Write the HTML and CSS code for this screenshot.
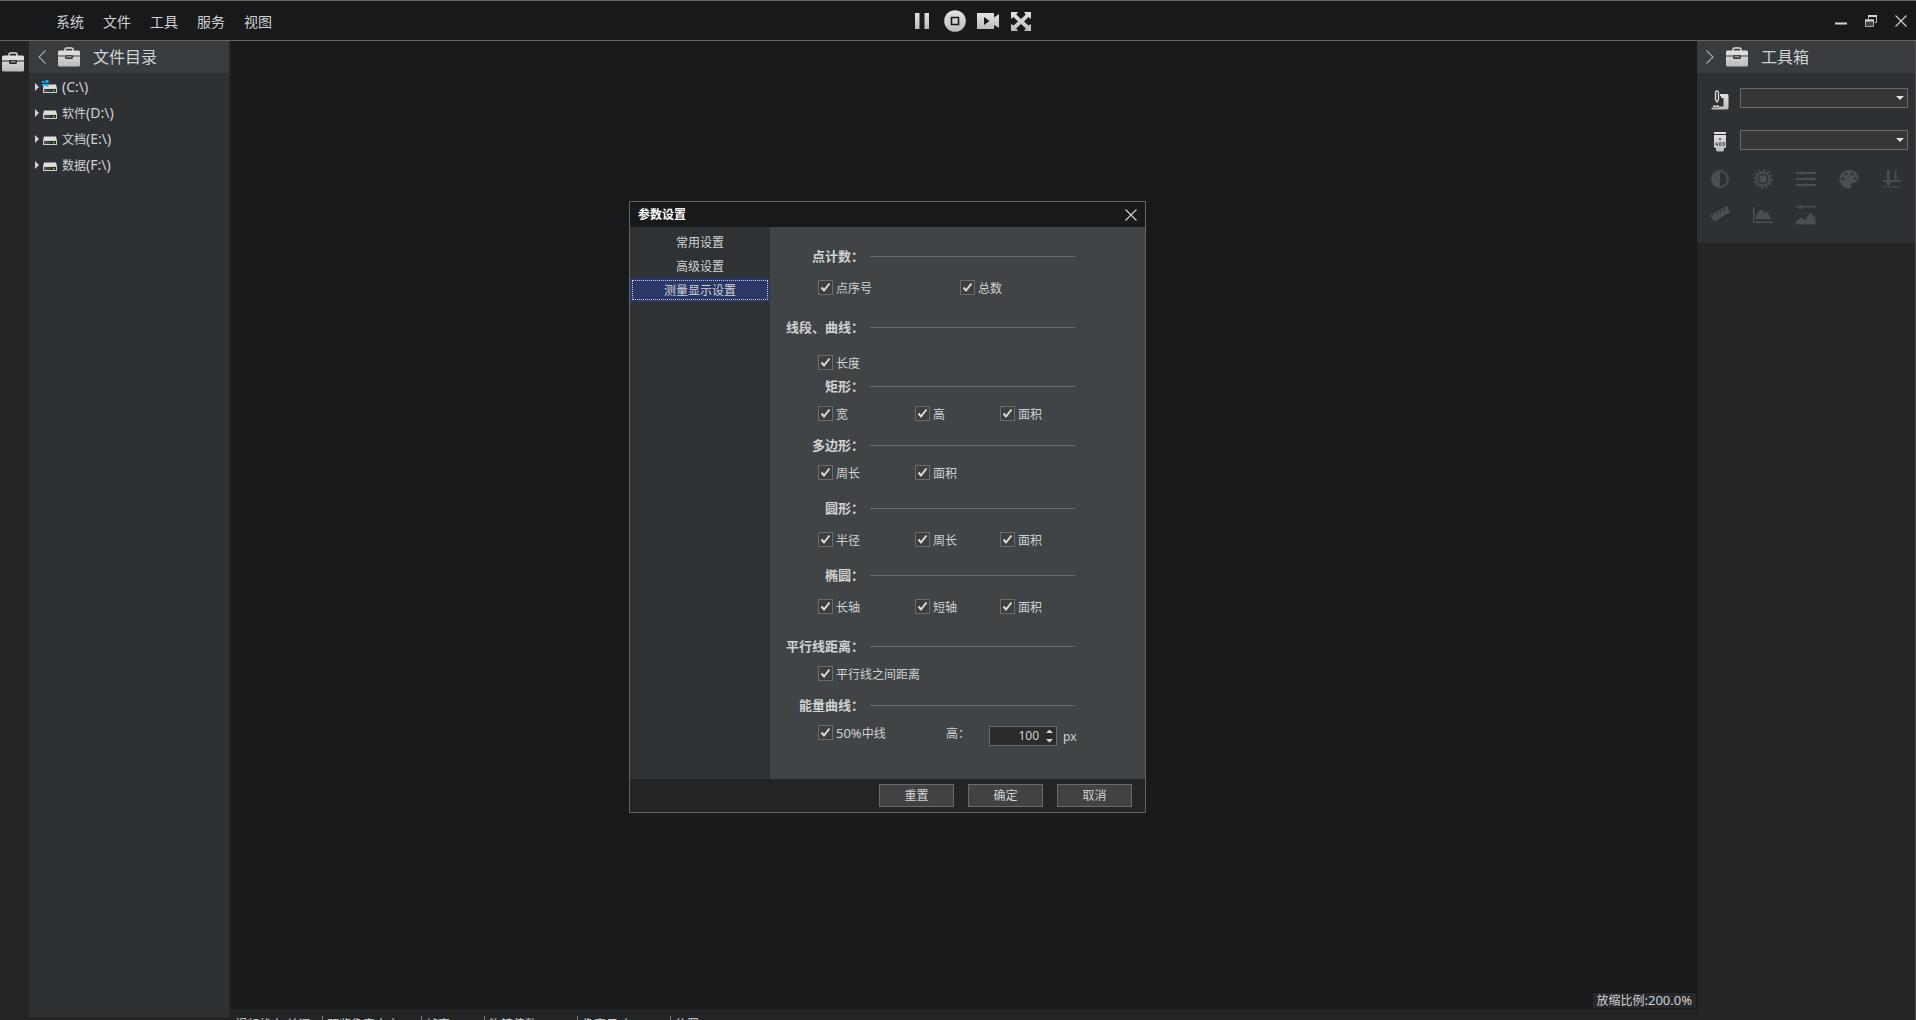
FILE: index.html
```html
<!DOCTYPE html>
<html lang="zh-CN">
<head>
<meta charset="utf-8">
<title>参数设置</title>
<link rel="stylesheet" href="styles.css">
</head>
<body>
<svg class="defs" aria-hidden="true">
  <defs>
    <linearGradient id="metal" x1="0" y1="0" x2="0" y2="1"><stop offset="0" stop-color="#e2e3e5"/><stop offset="1" stop-color="#babbbd"/></linearGradient>
    <linearGradient id="dark" x1="0" y1="0" x2="1" y2="0"><stop offset="0" stop-color="#555"/><stop offset="1" stop-color="#1c1c1c"/></linearGradient>
    <symbol id="case" viewBox="0 0 22 20">
      <path d="M7 4V2.500Q7 1 8.500 1H13.500Q15 1 15 2.500V4" fill="none" stroke="#dcdddf" stroke-width="1.500"/>
      <path d="M1.500 3.500H20.500Q22 3.500 22 5V8.500H14.500V8H7.500V8.500H0V5Q0 3.500 1.500 3.500ZM0 9.500H7V10.500Q7 12 8.500 12H13.500Q15 12 15 10.500V9.500H22V18Q22 19.500 20.500 19.500H1.500Q0 19.500 0 18Z" fill="url(#metal)"/>
      <path d="M8.500 8.800H13.500V10.500H8.500Z" fill="#8d9092"/>
    </symbol>
    <symbol id="drive" viewBox="0 0 16 14">
      <path d="M2 4.500H14L15 8.500H1Z" fill="#dedede"/>
      <path d="M1 8H15V13H1Z" fill="#cfcfcf"/>
      <path d="M2 9H14V12H2Z" fill="url(#dark)"/>
      <path d="M11 10H12.500V11.500H11Z" fill="#3f3"/>
    </symbol>
  </defs>
</svg>
<div class="app">
  <header class="topbar">
    <nav class="menu">
      <button type="button">系统</button>
      <button type="button">文件</button>
      <button type="button">工具</button>
      <button type="button">服务</button>
      <button type="button">视图</button>
    </nav>
    <div class="transport">
      <button type="button" aria-label="暂停"><svg viewBox="0 0 22 22"><path d="M4 3H8.500V19H4ZM13.500 3H18V19H13.500Z" fill="url(#metal)"/></svg></button>
      <button type="button" aria-label="停止"><svg viewBox="0 0 22 22"><circle cx="11" cy="11" r="10.800" fill="url(#metal)"/><path d="M7.500 7.500H14.500V14.500H7.500Z" fill="#d0d1d3" stroke="#17191a" stroke-width="1.600"/></svg></button>
      <button type="button" aria-label="录像"><svg viewBox="0 0 22 22"><path fill-rule="evenodd" d="M0 3H17V7.500L22 4V18L17 15V19H0ZM7 7V15L12.500 11Z" fill="url(#metal)"/></svg></button>
      <button type="button" aria-label="全屏"><svg viewBox="0 0 22 22"><path d="M1 2H8L6.200 4.500L11 9L15.800 4.500L14 2H21V9L18.500 7L14 11.500L18.500 15.500L21 14V21H14L15.800 18.500L11 14L6.200 18.500L8 21H1V14L3.500 15.500L8 11.500L3.500 7L1 9Z" fill="url(#metal)"/></svg></button>
    </div>
    <div class="window-buttons">
      <button type="button" aria-label="最小化"><svg viewBox="0 0 12 12"><path d="M0 7.500H12V9.500H0Z" fill="#d4d5d6"/></svg></button>
      <button type="button" aria-label="还原"><svg viewBox="0 0 12 12"><path d="M3.500 4V1.500H11.500V7.500H9.500" fill="none" stroke="#b8b9ba"/><path d="M3 0H12V2H3Z" fill="#d4d5d6"/><path d="M.5 5H8.500V11.500H.5Z" fill="#444" stroke="#aaa"/><path d="M0 4.500H9V6.500H0Z" fill="#d4d5d6"/></svg></button>
      <button type="button" aria-label="关闭"><svg viewBox="0 0 12 12"><path d="M.5 .5L11.500 11.500M11.500 .5L.5 11.500" stroke="#d4d5d6" stroke-width="1.100"/></svg></button>
    </div>
  </header>

  <div class="workspace">
    <aside class="rail"><svg class="case"><use href="#case"/></svg></aside>

    <section class="panel files">
      <h2 class="panel-head">
        <svg class="chevron" viewBox="0 0 8 14"><path d="M7.500 .5L1 7L7.500 13.500" fill="none" stroke="#a0a2a4" stroke-width="1.200"/></svg>
        <svg class="case"><use href="#case"/></svg>
        <span>文件目录</span>
      </h2>
      <ul class="tree">
        <li><span class="arrow"></span><svg class="drive" viewBox="0 0 16 14"><use href="#drive"/><path d="M0 1H2.500V3H0ZM3.500 0H6.500V3H3.500ZM0 4H2.500V6H0ZM3.500 4H6.500V6.500H3.500Z" fill="#00b4f5"/></svg><span class="latin">(C:\)</span></li>
        <li><span class="arrow"></span><svg class="drive"><use href="#drive"/></svg><span>软件<span class="latin">(D:\)</span></span></li>
        <li><span class="arrow"></span><svg class="drive"><use href="#drive"/></svg><span>文档<span class="latin">(E:\)</span></span></li>
        <li><span class="arrow"></span><svg class="drive"><use href="#drive"/></svg><span>数据<span class="latin">(F:\)</span></span></li>
      </ul>
    </section>

    <main class="canvas"><span class="zoom">放缩比例<span class="figure">:200.0%</span></span></main>

    <aside class="toolbox">
      <div class="panel">
        <h2 class="panel-head">
          <svg class="chevron" viewBox="0 0 8 14"><path d="M.5 .5L7 7L.5 13.500" fill="none" stroke="#a0a2a4" stroke-width="1.200"/></svg>
          <svg class="case"><use href="#case"/></svg>
          <span>工具箱</span>
        </h2>
        <div class="device">
          <svg viewBox="0 0 18 20"><path d="M4.500 2.500Q4.500 1 6 1Q7.500 1 7.500 2.500V9.500L6 12L4.500 9.500Z" fill="none" stroke="#d4d5d6" stroke-width="1.400"/><path d="M9 4H16Q17.500 4 17.500 5.500V18.500L16.500 19.500H1L0 18.500L1.500 17.500H8V16.500H12.500V8H10V6H9Z" fill="url(#metal)"/><path d="M2 15.500H8V17H2Z" fill="#d4d5d6"/></svg>
          <select aria-label="相机"><option></option></select>
        </div>
        <div class="device">
          <svg viewBox="0 0 18 20"><path d="M3 0H15V2H3ZM3 3H15V15Q15 16 14 16H13V18L12 19.500H6L5 18V16H4Q3 16 3 15Z" fill="url(#metal)"/><path d="M8 6L10 8M10 6L8 8M5.500 10L4.500 12.500H7M6.500 11V14M8.500 10.500H10.200V13.500H8.500ZM12 10.500H13.500V13.500H12Z" fill="none" stroke="#55585a" stroke-width=".9"/></svg>
          <select aria-label="物镜"><option></option></select>
        </div>
        <div class="tools">
          <button type="button" disabled aria-label="对比度"><svg viewBox="0 0 20 20"><circle cx="10" cy="10" r="8" fill="none" stroke="currentColor" stroke-width="2"/><path d="M10 2A8 8 0 0 0 10 18Z" fill="currentColor"/></svg></button>
          <button type="button" disabled aria-label="亮度"><svg viewBox="0 0 20 20"><circle cx="10" cy="10" r="6.500" fill="none" stroke="currentColor" stroke-width="2"/><circle cx="10" cy="10" r="4" fill="currentColor"/><circle cx="10" cy="10" r="8.500" fill="none" stroke="currentColor" stroke-width="3" stroke-dasharray="1.800 2.650"/></svg></button>
          <button type="button" disabled aria-label="调节"><svg viewBox="0 0 20 20"><path d="M0 3H20V5H0ZM0 9H20V11H0ZM0 15H20V17H0ZM6 1.500V6.500L3 4ZM15 7.500L18 10L15 12.500ZM10 13.500V18.500L7 16Z" fill="currentColor"/></svg></button>
          <button type="button" disabled aria-label="调色"><svg viewBox="0 0 20 20"><path fill-rule="evenodd" d="M10 1C16 1 19.500 5 19.500 9C19.500 14 15 13 13 14C11 15.500 14 19.500 10.500 19.500C5 19.500 .5 15 .5 10C.5 5 4.500 1 10 1ZM4 8A1.700 1.500 0 1 0 4 11A1.700 1.500 0 1 0 4 8ZM7 3.500A1.500 1.500 0 1 0 7 6.500A1.500 1.500 0 1 0 7 3.500ZM13 3.500A1.500 1.500 0 1 0 13 6.500A1.500 1.500 0 1 0 13 3.500ZM16.500 8A1.500 1.500 0 1 0 16.500 11A1.500 1.500 0 1 0 16.500 8Z" fill="currentColor"/></svg></button>
          <button type="button" disabled aria-label="景深"><svg viewBox="0 0 20 20"><path d="M5 1H7.500V14H9L6.200 17.500L3.500 14H5ZM13 1H14.500V8H16L13.800 11L11.500 8H13ZM1 11H19V13H1ZM1 17.500H19V18.500H1Z" fill="currentColor"/></svg></button>
          <button type="button" disabled aria-label="测量"><svg viewBox="0 0 20 20"><path d="M0 10L2 9L3.500 11.500L4.500 11L3 8.500L5.500 7L7.500 10L8.500 9.500L6.500 6.500L9 5L10.500 7.500L11.500 7L10 4.500L12.500 3L14.500 6L15.500 5.500L13.500 2.500L17 1L20 7L4 17Z" fill="currentColor"/></svg></button>
          <button type="button" disabled aria-label="直方图"><svg viewBox="0 0 20 20"><path d="M0 2H1.500V16.500H20V18H0ZM3 14V10.500L8 4L11 8L13.500 6L18.500 14Z" fill="currentColor"/></svg></button>
          <button type="button" disabled aria-label="图像处理"><svg viewBox="0 0 20 20"><path d="M0 1H20V2.500H0ZM3 0H5.500V4H3ZM0 19.500V17L5 12L9 15L14 7.500L19.500 13V19.500Z" fill="currentColor"/></svg></button>
        </div>
      </div>
    </aside>
  </div>

  <footer class="status">
    <span>视频状态:关闭</span><span>预览像素大小</span><span>帧率:0.0</span><span>物镜倍数:10.0</span><span>像素尺寸:1.00</span><span>位置</span>
  </footer>
</div>

<div class="dialog" role="dialog" aria-labelledby="dlg-title">
  <div class="dialog-title">
    <h1 id="dlg-title">参数设置</h1>
    <button type="button" aria-label="关闭"><svg viewBox="0 0 12 12"><path d="M.5 .5L11.500 11.500M11.500 .5L.5 11.500" stroke="#d4d5d6" stroke-width="1.100"/></svg></button>
  </div>
  <div class="dialog-body">
    <nav class="tabs">
      <button type="button">常用设置</button>
      <button type="button">高级设置</button>
      <button type="button" class="active">测量显示设置</button>
    </nav>
    <form class="settings">
      <section class="group">
        <h3>点计数：</h3>
        <div class="checks wide">
          <label><input type="checkbox" checked><span>点序号</span></label>
          <label><input type="checkbox" checked><span>总数</span></label>
        </div>
      </section>
      <section class="group loose after-lg">
        <h3>线段、曲线：</h3>
        <div class="checks"><label><input type="checkbox" checked><span>长度</span></label></div>
      </section>
      <section class="group tight after-xs">
        <h3>矩形：</h3>
        <div class="checks">
          <label><input type="checkbox" checked><span>宽</span></label>
          <label><input type="checkbox" checked><span>高</span></label>
          <label><input type="checkbox" checked><span>面积</span></label>
        </div>
      </section>
      <section class="group tight after-sm">
        <h3>多边形：</h3>
        <div class="checks">
          <label><input type="checkbox" checked><span>周长</span></label>
          <label><input type="checkbox" checked><span>面积</span></label>
        </div>
      </section>
      <section class="group after-md">
        <h3>圆形：</h3>
        <div class="checks">
          <label><input type="checkbox" checked><span>半径</span></label>
          <label><input type="checkbox" checked><span>周长</span></label>
          <label><input type="checkbox" checked><span>面积</span></label>
        </div>
      </section>
      <section class="group after-md">
        <h3>椭圆：</h3>
        <div class="checks">
          <label><input type="checkbox" checked><span>长轴</span></label>
          <label><input type="checkbox" checked><span>短轴</span></label>
          <label><input type="checkbox" checked><span>面积</span></label>
        </div>
      </section>
      <section class="group tight after-lg">
        <h3>平行线距离：</h3>
        <div class="checks single"><label><input type="checkbox" checked><span>平行线之间距离</span></label></div>
      </section>
      <section class="group tight after-sm">
        <h3>能量曲线：</h3>
        <div class="checks energy">
          <label><input type="checkbox" checked><span><span class="figure">50%</span>中线</span></label>
          <label for="height">高：</label>
          <div class="spin">
            <input id="height" type="text" inputmode="numeric" value="100">
            <svg viewBox="0 0 7 14"><path d="M0 4H7L3.500 .5ZM0 10H7L3.500 13.500Z" fill="#d4d5d6"/></svg>
          </div>
          <span class="unit">px</span>
        </div>
      </section>
    </form>
  </div>
  <div class="dialog-actions">
    <button type="button">重置</button>
    <button type="button">确定</button>
    <button type="button">取消</button>
  </div>
</div>
</body>
</html>
```
FILE: styles.css
```css
* { box-sizing: border-box; }

body {
  margin: 0;
  overflow: hidden;
  background: #232425;
  color: #d0d2d3;
  font: 12px/18px "Noto Sans", "Noto Sans CJK SC", sans-serif;
}

button, input, select { font: inherit; color: inherit; }
button { padding: 0; border: 0; background: none; }
h1, h2, h3, ul { margin: 0; padding: 0; font-weight: normal; list-style: none; }
svg { display: block; flex: none; }
.defs { position: absolute; width: 0; height: 0; }
.latin { font-size: 14px; }
.figure { font-size: 13px; }

.app { display: flex; flex-direction: column; height: 100vh; }

/* Top bar */
.topbar {
  display: grid;
  grid-template-columns: 1fr auto 1fr;
  align-items: center;
  height: 41px;
  flex: none;
  padding: 0 9px 0 36px;
  border: solid #626364;
  border-width: 1px 0;
  background: #17191a;
}
.menu { display: flex; gap: 19px; padding: 2px 0 0 20px; font-size: 14px; line-height: 20px; }
.transport { display: flex; gap: 11px; }
.transport svg { width: 22px; height: 22px; }
.window-buttons { display: flex; justify-content: flex-end; gap: 18px; }
.window-buttons svg { width: 12px; height: 12px; }

/* Work area */
.workspace { display: grid; grid-template-columns: 29px 200px 1fr 219px; flex: 1; min-height: 0; }
.rail { padding: 11px 0 0 2px; }
.case { width: 22px; height: 20px; }
.panel { background: #2d3134; }
.files { margin-bottom: -8px; }
.panel-head {
  display: flex;
  align-items: center;
  height: 32px;
  padding-left: 9px;
  background: #393c3f;
  font-size: 16px;
  line-height: 24px;
}
.chevron { width: 8px; height: 14px; margin-right: 12px; }
.panel-head span { margin-left: 13px; }

.tree { padding-top: 1px; }
.tree li { display: flex; align-items: center; height: 26px; padding-left: 6px; }
.arrow { border: 4px solid transparent; border-left-color: #d0d2d3; border-right: 0; }
.drive { width: 16px; height: 14px; margin: 0 4px 0 3px; }

.canvas {
  display: flex;
  align-items: flex-end;
  justify-content: flex-end;
  margin-left: 2px;
  padding: 0 1px 1px 0;
  background: #17191a;
}
.zoom { padding: 0 4px 0 3px; background: #26282a; line-height: 15px; }

.toolbox { margin-bottom: -11px; border-right: 1px solid #4c4d4e; background: #252525; }
.toolbox .panel { padding-bottom: 10px; }
.device { position: relative; display: flex; align-items: center; height: 42px; padding: 0 7px 0 14px; }
.panel-head + .device { margin-top: 4px; }
.device svg { width: 18px; height: 20px; margin: 4px 11px 0 0; }
.device select {
  flex: 1;
  height: 20px;
  border: 1px solid #6b6b6b;
  appearance: none;
  background: #363636;
}
.device::after {
  position: absolute;
  right: 11px;
  top: 19px;
  border: 4px solid transparent;
  border-top-color: #e4e4e4;
  border-bottom: 0;
  content: "";
}
.tools { display: grid; grid-template-columns: repeat(5, 43px); padding-left: 1px; color: #4a4e51; }
.tools button { display: flex; align-items: center; justify-content: center; height: 36px; color: inherit; }
.tools svg { width: 20px; height: 20px; }

/* Status bar: the labels run past the lower edge of the window */
.status {
  display: grid;
  grid-template-columns: 92px 99px 63px 93px 93px auto;
  justify-content: start;
  flex: none;
  height: 11px;
  padding: 7px 0 0 231px;
}
.status span { height: 18px; padding-left: 4px; border-right: 1px solid #77797a; white-space: nowrap; }
.status span:last-child { border: 0; }

/* Settings window */
.dialog {
  position: absolute;
  left: 629px;
  top: 201px;
  width: 517px;
  border: 1px solid #626364;
  background: #232425;
}
.dialog-title {
  display: flex;
  align-items: center;
  justify-content: space-between;
  height: 25px;
  padding: 0 8px;
  background: #17191a;
}
.dialog-title h1 { color: #fff; font-size: 12px; font-weight: bold; }
.dialog-title svg { width: 12px; height: 12px; }
.dialog-body { display: flex; }

.tabs { display: flex; flex-direction: column; width: 140px; padding-top: 3px; background: #2e3235; }
.tabs button { height: 24px; padding-top: 2px; text-align: center; }
.tabs .active { background: #2b3766; outline: 1px dotted #c8ccd8; outline-offset: -3px; }

.settings { flex: 1; padding: 19px 0 33px; background: #414446; }
.group h3 {
  display: grid;
  grid-template-columns: 94px 205px;
  column-gap: 6px;
  align-items: center;
  font-size: 13px;
  font-weight: bold;
  line-height: 20px;
  text-align: right;
}
.group h3::after { height: 1px; background: #6b6b6b; content: ""; }
.checks { display: grid; grid-template-columns: 97px 85px 1fr; padding: 12px 0 0 48px; }
.wide { grid-template-columns: 142px 1fr; }
.single { grid-template-columns: 1fr; }
.energy { grid-template-columns: 128px 43px 68px auto; }
.tight .checks { padding-top: 8px; }
.loose .checks { padding-top: 16px; }
.after-xs { margin-top: 4px; }
.after-sm { margin-top: 12px; }
.after-md { margin-top: 16px; }
.after-lg { margin-top: 20px; }

.checks label { display: flex; align-items: center; gap: 3px; height: 19px; }
.checks label > span, .unit, .energy label[for] { padding-top: 2px; line-height: 17px; }
.checks input[type="checkbox"] {
  width: 15px;
  height: 15px;
  margin: 0;
  border: 1px solid #6b6b6b;
  appearance: none;
  background: #3e3e3e url("data:image/svg+xml,%3Csvg xmlns='http://www.w3.org/2000/svg' viewBox='0 0 13 13'%3E%3Cpath d='M2.500 6.500L5 9.500L10.500 2.500' fill='none' stroke='%23dcdcdc' stroke-width='2'/%3E%3C/svg%3E");
}
.spin {
  display: flex;
  align-items: center;
  height: 20px;
  margin-top: 3px;
  padding-right: 3px;
  border: 1px solid #6b6b6b;
  background: #2c2c2c;
}
.spin input {
  flex: 1;
  min-width: 0;
  height: 18px;
  padding: 0 7px 0 0;
  border: 0;
  outline: 0;
  background: none;
  text-align: right;
}
.spin svg { width: 7px; height: 14px; }
.unit { margin: 3px 0 0 6px; }

.dialog-actions { display: flex; align-items: center; justify-content: flex-end; gap: 14px; height: 33px; padding-right: 13px; }
.dialog-actions button { width: 75px; height: 23px; border: 1px solid #6b6b6b; background: #424242; }
```
